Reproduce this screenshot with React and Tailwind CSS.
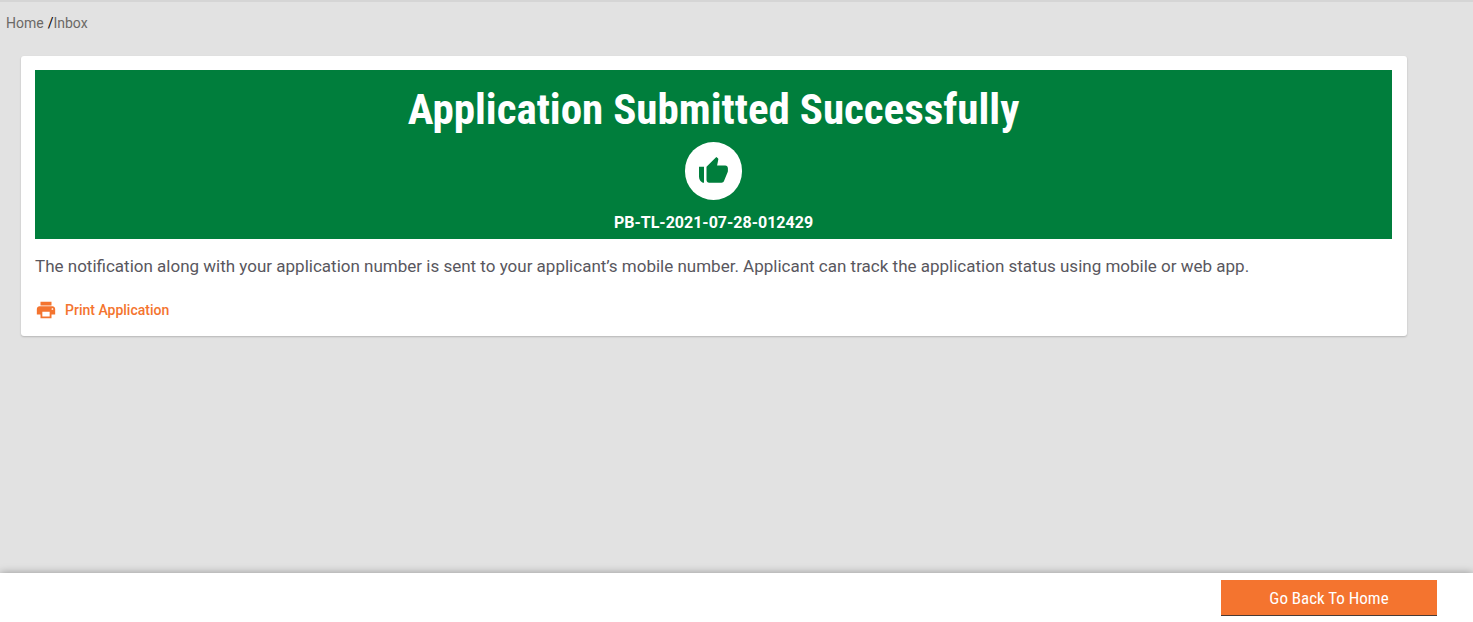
import React from "react";
import { MdPrint } from "react-icons/md";

function ThumbUpIcon() {
  return (
    <svg viewBox="0 0 29 30" className="h-[30px] w-[29px]" fill="currentColor" aria-hidden="true">
      <path d="M0 10.800h5v16H3.800C1.700 25.700 0 23.600 0 20.800z" />
      <path d="M7.500 10.800 17.300 .9l1.600 1.400c.3.300.5.800.4 1.300L18.100 9.500h8.100c1.600 0 2.700 1.200 2.700 2.700v2.700c0 .400-.1.700-.200 1L25 25.100c-.4 1-1.300 1.700-2.500 1.700H10.200c-1.500 0-2.700-1.200-2.700-2.700z" />
    </svg>
  );
}

export default function App() {
  return (
    <div className="flex min-h-screen flex-col bg-[#e2e2e2] font-[Roboto,sans-serif]">
      <nav aria-label="Breadcrumb" className="flex border-t-2 border-[#d5d5d5] px-1.5 pt-[11px] text-sm leading-5 text-[#6b6966]">
        <a href="#home">Home</a>
        <span className="pl-1 text-black">/</span>
        <a href="#inbox">Inbox</a>
      </nav>
      <main className="flex-1 pt-[23px] pr-[66px] pl-[21px]">
        <section className="rounded-[3px] bg-white p-3.5 pr-[15px] shadow-[0_1px_2px_rgba(0,0,0,0.2)]">
          <div className="flex flex-col items-center bg-[#007e3c] pt-2 pb-1 text-white">
            <h1 className="pb-0.5 font-['Roboto_Condensed',Roboto,sans-serif] text-[43px] leading-[62px] font-bold">
              Application Submitted Successfully
            </h1>
            <span className="flex h-[58px] w-[57px] items-center justify-center rounded-full bg-white text-[#007e3c]">
              <ThumbUpIcon />
            </span>
            <p className="pt-[11px] text-base leading-6 font-bold">PB-TL-2021-07-28-012429</p>
          </div>
          <p className="pt-[15px] text-[17px] leading-6 text-[#59575e]">
            The notification along with your application number is sent to your applicant’s mobile number. Applicant can track the application status using mobile or web app.
          </p>
          <button type="button" className="mt-5 flex items-center gap-2 text-sm leading-6 font-medium text-[#f4742f]">
            <MdPrint size={22} aria-hidden="true" />
            Print Application
          </button>
        </section>
      </main>
      <footer className="flex justify-end bg-white pt-[7px] pr-9 pb-1.5 shadow-[0_0_8px_rgba(0,0,0,0.35)]">
        <button type="button" className="h-9 w-[216px] border-b border-[#4a3a34] bg-[#f4742f] pt-0.5 font-['Roboto_Condensed',Roboto,sans-serif] text-[17px] text-white">
          Go Back To Home
        </button>
      </footer>
    </div>
  );
}
